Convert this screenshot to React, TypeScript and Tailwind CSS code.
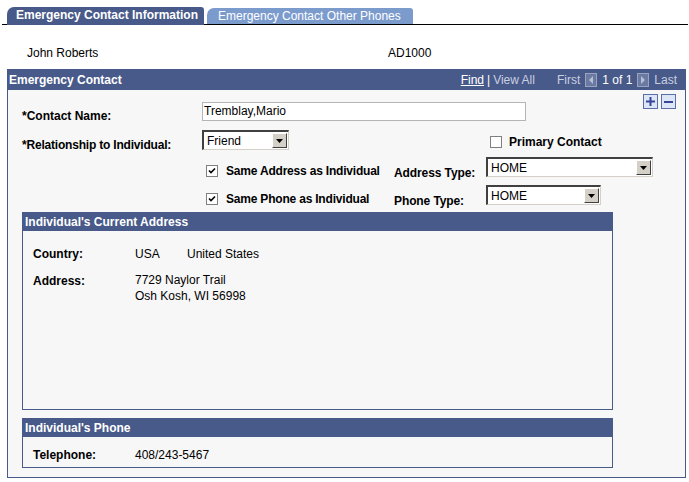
export default function App() {
  const font = { fontFamily: '"Liberation Sans", Arial, sans-serif' };

  return (
    <div className="w-[689px] h-[482px] bg-white text-[12px] text-black overflow-hidden" style={font}>
      {/* Tabs */}
      <div className="flex items-end h-[25px] pt-[7px] pl-[2px] whitespace-nowrap">
        <div className="w-[5px] border-b border-black" />
        <div className="h-[18px] w-[197px] bg-[#485a8a] rounded-tl-[7px] rounded-tr-[3px] text-white font-bold text-[12px] pl-[9px] leading-[17px]">
          Emergency Contact Information
        </div>
        <div className="h-[18px] w-[3px] border-b border-black" />
        <div className="h-[17px] w-[206px] bg-[#7b9bcd] rounded-tl-[7px] rounded-tr-[3px] text-white text-[12px] pl-[11px] leading-[16px] border-b border-black">
          Emergency Contact Other Phones
        </div>
        <div className="flex-1 mr-[1px] border-b border-black" />
      </div>

      {/* Employee line */}
      <div className="flex h-[44px] items-center pt-[12px]">
        <div className="pl-[27px] w-[388px]">John Roberts</div>
        <div>AD1000</div>
      </div>

      {/* Outer box */}
      <div className="ml-[7px] w-[679px] h-[409px] border border-[#485a8a] bg-[#f7f7f7]">
        <div className="h-[20px] bg-[#485a8a] flex items-center text-white whitespace-nowrap">
          <div className="font-bold pl-[1px]">Emergency Contact</div>
          <div className="ml-auto flex items-center pr-[8px] text-[12px]">
            <span className="underline">Find</span>
            <span className="mx-[3px]">|</span>
            <span className="text-[#c9cfe0]">View All</span>
            <span className="text-[#c9cfe0] ml-[22px]">First</span>
            <ArrowBox dir="left" />
            <span>1 of 1</span>
            <ArrowBox dir="right" />
            <span className="text-[#c9cfe0]">Last</span>
          </div>
        </div>

        {/* Form */}
        <div className="relative h-[122px] whitespace-nowrap">
          <div className="absolute right-[9px] top-[4px] flex gap-[3px]">
            <div className="w-[15px] h-[15px] border border-[#5a6ea8] bg-[#dde6f7] flex items-center justify-center">
              <svg width="9" height="9" viewBox="0 0 9 9">
                <rect x="3.5" y="0" width="2" height="9" fill="#37469a" />
                <rect x="0" y="3.5" width="9" height="2" fill="#37469a" />
              </svg>
            </div>
            <div className="w-[15px] h-[15px] border border-[#5a6ea8] bg-[#dde6f7] flex items-center justify-center">
              <div className="w-[9px] h-[2px] bg-[#37469a]" />
            </div>
          </div>

          {/* Contact name */}
          <div className="flex items-start pt-[12px] h-[31px]">
            <div className="pl-[14px] w-[194px] font-bold pt-[5px]">*Contact Name:</div>
            <div className="w-[324px] h-[19px] border border-[#b5b5b5] bg-white pl-[1px] leading-[17px]">Tremblay,Mario</div>
          </div>

          {/* Relationship */}
          <div className="flex items-start mt-[9px] h-[19px]">
            <div className="pl-[14px] w-[194px] font-bold pt-[6px] tracking-[-0.2px]">*Relationship to Individual:</div>
            <Select value="Friend" width={87} />
            <div className="ml-[201px] mt-[3px] flex items-center">
              <div className="w-[12px] h-[12px] border border-[#808080] bg-white" />
              <span className="ml-[7px] font-bold">Primary Contact</span>
            </div>
          </div>

          {/* Same address */}
          <div className="flex items-start mt-[8px] h-[20px]">
            <div className="w-[198px]" />
            <div className="mt-[5px] flex items-center">
              <Check />
              <span className="ml-[8px] font-bold w-[168px] tracking-[-0.2px]">Same Address as Individual</span>
            </div>
            <span className="font-bold w-[92px] pt-[7px] tracking-[-0.1px]">Address Type:</span>
            <Select value="HOME" width={167} />
          </div>

          {/* Same phone */}
          <div className="flex items-start mt-[8px] h-[20px]">
            <div className="w-[198px]" />
            <div className="mt-[5px] flex items-center">
              <Check />
              <span className="ml-[8px] font-bold w-[168px] tracking-[-0.2px]">Same Phone as Individual</span>
            </div>
            <span className="font-bold w-[92px] pt-[7px] tracking-[-0.1px]">Phone Type:</span>
            <Select value="HOME" width={115} />
          </div>
        </div>

        {/* Current address box */}
        <div className="ml-[14px] w-[591px] h-[198px] border border-[#485a8a]">
          <div className="h-[18px] bg-[#485a8a] text-white font-bold leading-[18px] pl-[2px]">Individual's Current Address</div>
          <div className="flex pt-[14px]">
            <div className="pl-[10px] w-[112px] font-bold">Country:</div>
            <div className="w-[52px]">USA</div>
            <div>United States</div>
          </div>
          <div className="flex pt-[9px]">
            <div className="pl-[10px] w-[112px] font-bold">Address:</div>
            <div className="leading-[16px]">
              <div>7729 Naylor Trail</div>
              <div>Osh Kosh, WI 56998</div>
            </div>
          </div>
        </div>

        {/* Phone box */}
        <div className="ml-[14px] mt-[8px] w-[591px] h-[50px] border border-[#485a8a]">
          <div className="h-[18px] bg-[#485a8a] text-white font-bold leading-[18px] pl-[2px]">Individual's Phone</div>
          <div className="flex pt-[9px]">
            <div className="pl-[10px] w-[112px] font-bold">Telephone:</div>
            <div>408/243-5467</div>
          </div>
        </div>
      </div>
    </div>
  );
}

function ArrowBox({ dir }: { dir: "left" | "right" }) {
  return (
    <div className="w-[12px] h-[14px] border border-[#9aa3bd] bg-[#6b7aa3] flex items-center justify-center mx-[5px]">
      <svg width="6" height="8" viewBox="0 0 6 8">
        {dir === "left" ? (
          <polygon points="5,0 5,8 1,4" fill="#b8bfd3" />
        ) : (
          <polygon points="1,0 1,8 5,4" fill="#b8bfd3" />
        )}
      </svg>
    </div>
  );
}

function Check() {
  return (
    <div className="w-[12px] h-[12px] border border-[#808080] bg-white flex items-center justify-center shrink-0">
      <svg width="8" height="8" viewBox="0 0 8 8">
        <path d="M1 3.5 L3 5.5 L7 1.5" stroke="#000" strokeWidth="1.6" fill="none" />
      </svg>
    </div>
  );
}

function Select({ value, width }: { value: string; width: number }) {
  return (
    <div
      className="h-[20px] shrink-0 border-t-2 border-l-2 border-[#404040] border-b border-r border-b-[#d4d0c8] border-r-[#d4d0c8] bg-white flex items-center"
      style={{ width }}
    >
      <span className="pl-[3px] flex-1">{value}</span>
      <div className="w-[15px] h-[15px] mr-[1px] bg-[#d4d0c8] border-t border-l border-white border-b border-r border-b-[#404040] border-r-[#404040] flex items-center justify-center">
        <svg width="7" height="4" viewBox="0 0 7 4">
          <polygon points="0,0 7,0 3.5,4" fill="#000" />
        </svg>
      </div>
    </div>
  );
}
